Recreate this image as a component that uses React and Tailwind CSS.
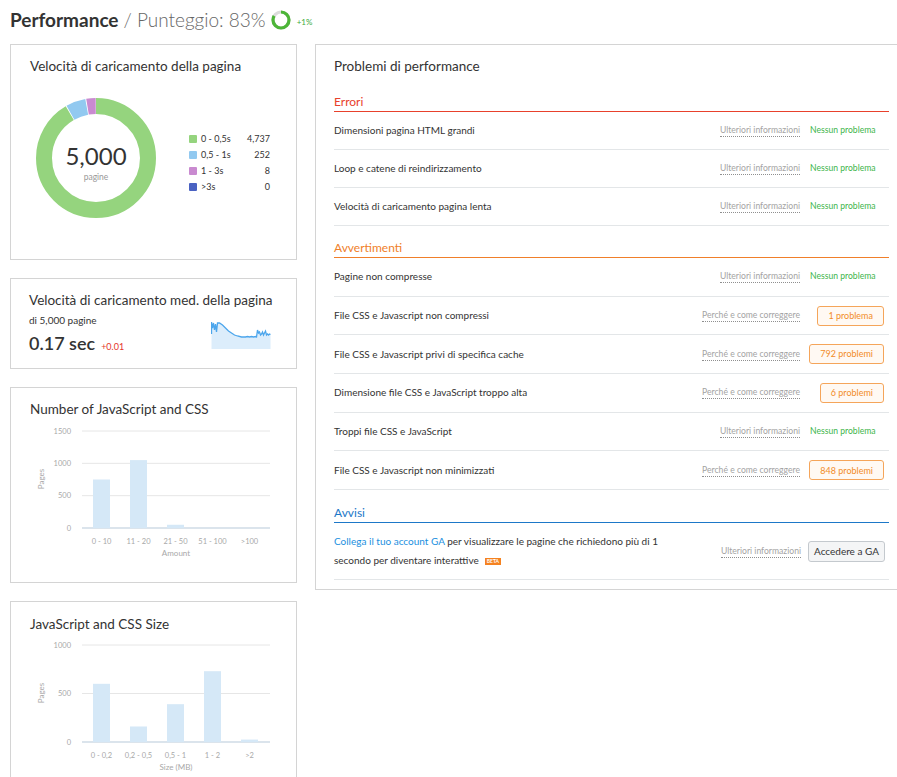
import React from "react";

const Card = ({ className = "", children }) => (
  <div className={`border border-[#d4d4d4] bg-white ${className}`}>{children}</div>
);

const ScoreRing = () => {
  const r = 8;
  const c = 2 * Math.PI * r;
  return (
    <svg width="20" height="20" viewBox="0 0 20 20" className="ml-[5px]">
      <circle cx="10" cy="10" r={r} fill="none" stroke="#dcdcdc" strokeWidth="3.2" />
      <circle
        cx="10"
        cy="10"
        r={r}
        fill="none"
        stroke="#4cb537"
        strokeWidth="3.2"
        strokeDasharray={`${c * 0.83} ${c}`}
        transform="rotate(-90 10 10)"
      />
    </svg>
  );
};

const Donut = () => {
  const r = 52;
  const c = 2 * Math.PI * r;
  // degrees: green 0-330, blue 330-350, purple 350-360
  const segs = [
    { color: "#95d47e", from: 0, to: 330 },
    { color: "#92c9f0", from: 330, to: 350 },
    { color: "#c98ad0", from: 350, to: 360 },
  ];
  return (
    <svg width="120" height="120" viewBox="0 0 120 120" className="ml-[6px] shrink-0">
      {segs.map((s) => (
        <circle
          key={s.color}
          cx="60"
          cy="60"
          r={r}
          fill="none"
          stroke={s.color}
          strokeWidth="16"
          strokeDasharray={`${((s.to - s.from) / 360) * c - 0.8} ${c}`}
          strokeDashoffset={-((s.from / 360) * c)}
          transform="rotate(-90 60 60)"
        />
      ))}
      <text x="60" y="67" textAnchor="middle" fontSize="24" fill="#333">
        5,000
      </text>
      <text x="60" y="82" textAnchor="middle" fontSize="8.5" fill="#999">
        pagine
      </text>
    </svg>
  );
};

const legend = [
  { color: "#95d47e", label: "0 - 0,5s", value: "4,737" },
  { color: "#92c9f0", label: "0,5 - 1s", value: "252" },
  { color: "#c98ad0", label: "1 - 3s", value: "8" },
  { color: "#4a62c2", label: ">3s", value: "0" },
];

const Sparkline = () => {
  const pts = [
    [0, 14], [0, 2], [1, 8], [2, 3], [3, 10], [4, 4], [5, 12], [6, 3], [8, 3], [11, 5],
    [14, 8], [17, 11], [20, 13], [23, 15], [26, 16], [30, 17], [34, 17], [36, 16.5],
    [38, 17], [40, 16.5], [42, 17], [44, 16.5], [45, 17], [46, 10], [47, 13], [48, 12],
    [49, 15], [50, 14], [51, 12], [52, 15], [53, 13], [54, 11], [55, 15], [56, 14],
    [57, 15], [58, 14], [59, 14.5],
  ];
  const line = pts.map((p, i) => `${i ? "L" : "M"}${p[0] + 0.5} ${p[1]}`).join(" ");
  return (
    <svg width="61" height="30" viewBox="0 0 61 30" className="mt-[10px] mr-[6px]">
      <path d={`${line} L59.5 29 L0.5 29 Z`} fill="#dcedfb" />
      <path d={line} fill="none" stroke="#4da6ec" strokeWidth="1.3" />
    </svg>
  );
};

// chart svg origin is the card content's left edge
const BarChart = ({ ticks, max, bars, xTitle }) => {
  const top = 8;
  const base = 105;
  const y = (v) => base - (v / max) * (base - top);
  return (
    <svg width="250" height="140" viewBox="0 0 250 140" className="block">
      {ticks.map((t) => (
        <g key={t}>
          <line
            x1="52"
            x2="240"
            y1={y(t)}
            y2={y(t)}
            stroke={t === 0 ? "#cfdbe6" : "#e6e6e6"}
            strokeWidth={t === 0 ? 1.5 : 1}
          />
          <text x="41" y={y(t) + 2.5} textAnchor="end" fontSize="7.5" fill="#a8a8a8">
            {t}
          </text>
        </g>
      ))}
      <text
        x="14"
        y="56"
        textAnchor="middle"
        fontSize="8"
        fill="#a8a8a8"
        transform="rotate(-90 14 56)"
      >
        Pages
      </text>
      {bars.map((b, i) => {
        const cx = 71.5 + i * 37;
        return (
          <g key={b.label}>
            {b.value > 0 && (
              <rect x={cx - 8.5} y={y(b.value)} width="17" height={base - y(b.value)} fill="#d5e8f7" />
            )}
            <text x={cx} y="121" textAnchor="middle" fontSize="7.5" fill="#a8a8a8">
              {b.label}
            </text>
          </g>
        );
      })}
      <text x="146" y="133" textAnchor="middle" fontSize="8" fill="#a8a8a8">
        {xTitle}
      </text>
    </svg>
  );
};

const Link = ({ children }) => (
  <span className="text-[8.6px] leading-[12px] text-[#a3a3a3] border-b border-dotted border-[#8f8f8f]">
    {children}
  </span>
);

const Status = ({ count }) =>
  count ? (
    <span className="h-[20px] px-[10px] flex items-center rounded-[3px] border border-[#f5a55a] bg-[#fff9f3] text-[9px] text-[#f28c28] mr-[5px]">
      {count}
    </span>
  ) : (
    <span className="text-[8.6px] text-[#3db54a] mr-auto pl-[2px]">Nessun problema</span>
  );

const Row = ({ label, count, h = "h-[38px]" }) => (
  <div className={`flex items-center ${h} border-b border-[#e3e6e8]`}>
    <span className="text-[10px] text-[#333] flex-1">{label}</span>
    <Link>{count ? "Perché e come correggere" : "Ulteriori informazioni"}</Link>
    <div className="w-[81px] ml-[8px] flex justify-end items-center">
      <Status count={count} />
    </div>
  </div>
);

const errors = [
  "Dimensioni pagina HTML grandi",
  "Loop e catene di reindirizzamento",
  "Velocità di caricamento pagina lenta",
];

const warnings = [
  { label: "Pagine non compresse" },
  { label: "File CSS e Javascript non compressi", count: "1 problema" },
  { label: "File CSS e Javascript privi di specifica cache", count: "792 problemi" },
  { label: "Dimensione file CSS e JavaScript troppo alta", count: "6 problemi" },
  { label: "Troppi file CSS e JavaScript" },
  { label: "File CSS e Javascript non minimizzati", count: "848 problemi" },
];

export default function App() {
  return (
    <div className="w-[897px] h-[777px] overflow-hidden bg-white font-['Lato',sans-serif] text-[#333]">
      <div className="h-[44px] flex items-center pl-[10px] pb-[4px]">
        <span className="text-[19px] font-bold text-[#333]">Performance</span>
        <span className="text-[19px] font-light text-[#666] ml-[5px]">/ Punteggio: 83%</span>
        <ScoreRing />
        <span className="text-[8px] text-[#3dab3d] ml-[6px] mt-[3px]">+1%</span>
      </div>

      <div className="flex gap-[18px] px-[10px]">
        <div className="w-[287px] shrink-0 flex flex-col">
          <Card className="h-[216px] pt-[11px] px-[19px]">
            <div className="text-[13.5px] leading-[20px]">Velocità di caricamento della pagina</div>
            <div className="flex items-center mt-[22px]">
              <Donut />
              <div className="ml-[33px] mt-[10px] w-[81px]">
                {legend.map((l) => (
                  <div key={l.label} className="flex items-center h-[16px] text-[9px] text-[#333]">
                    <span className="w-[8px] h-[8px] rounded-[1px]" style={{ background: l.color }} />
                    <span className="ml-[4px]">{l.label}</span>
                    <span className="ml-auto">{l.value}</span>
                  </div>
                ))}
              </div>
            </div>
          </Card>

          <Card className="h-[91px] mt-[18px] pt-[11px] px-[18px]">
            <div className="text-[13.5px] leading-[20px]">Velocità di caricamento med. della pagina</div>
            <div className="flex justify-between">
              <div>
                <div className="text-[10px] leading-[14px] mt-[3px]">di 5,000 pagine</div>
                <div className="flex items-baseline mt-[5px]">
                  <span className="text-[18px] leading-[22px] font-semibold">0.17 sec</span>
                  <span className="text-[9px] text-[#e5372c] ml-[6px]">+0.01</span>
                </div>
              </div>
              <Sparkline />
            </div>
          </Card>

          <Card className="h-[196px] mt-[18px] pt-[11px] px-[19px]">
            <div className="text-[13.5px] leading-[20px]">Number of JavaScript and CSS</div>
            <div className="mt-[4px]">
              <BarChart
                ticks={[0, 500, 1000, 1500]}
                max={1500}
                xTitle="Amount"
                bars={[
                  { label: "0 - 10", value: 750 },
                  { label: "11 - 20", value: 1050 },
                  { label: "21 - 50", value: 50 },
                  { label: "51 - 100", value: 0 },
                  { label: ">100", value: 0 },
                ]}
              />
            </div>
          </Card>

          <Card className="h-[200px] mt-[18px] pt-[12px] px-[19px]">
            <div className="text-[13.5px] leading-[20px]">JavaScript and CSS Size</div>
            <div className="mt-[3px]">
              <BarChart
                ticks={[0, 500, 1000]}
                max={1000}
                xTitle="Size (MB)"
                bars={[
                  { label: "0 - 0,2", value: 600 },
                  { label: "0,2 - 0,5", value: 160 },
                  { label: "0,5 - 1", value: 390 },
                  { label: "1 - 2", value: 730 },
                  { label: ">2", value: 25 },
                ]}
              />
            </div>
          </Card>
        </div>

        <Card className="w-[593px] shrink-0 self-start pt-[11px] px-[18px] pb-[9px]">
          <div className="text-[13.5px] leading-[20px]">Problemi di performance</div>

          <div className="pt-[17px] text-[12px] leading-[18px] text-[#e8412c]">Errori</div>
          <div className="h-[1px] bg-[#e8412c]" />
          {errors.map((e) => (
            <Row key={e} label={e} />
          ))}

          <div className="pt-[13px] text-[12px] leading-[18px] text-[#f07f2a]">Avvertimenti</div>
          <div className="h-[1px] bg-[#f07f2a]" />
          {warnings.map((w) => (
            <Row key={w.label} label={w.label} count={w.count} h="h-[38.7px]" />
          ))}

          <div className="pt-[14px] text-[12px] leading-[18px] text-[#1d78c8]">Avvisi</div>
          <div className="h-[1px] bg-[#1d78c8]" />
          <div className="flex items-center h-[57px] border-b border-[#e3e6e8]">
            <div className="flex-1 text-[10px] leading-[19px] text-[#333]">
              <span className="text-[#1a8fe0]">Collega il tuo account GA</span> per visualizzare le pagine che richiedono più di 1
              <br />
              secondo per diventare interattive
              <span className="inline-block ml-[6px] align-middle bg-[#f58220] text-white text-[5px] leading-[7px] font-bold px-[2px]">
                BETA
              </span>
            </div>
            <Link>Ulteriori informazioni</Link>
            <div className="w-[81px] ml-[7px] flex justify-end">
              <button className="w-[78px] h-[21px] mr-[4px] rounded-[3px] border border-[#c4c9ce] bg-[#f4f5f6] text-[10px] text-[#333]">
                Accedere a GA
              </button>
            </div>
          </div>
        </Card>
      </div>
    </div>
  );
}
